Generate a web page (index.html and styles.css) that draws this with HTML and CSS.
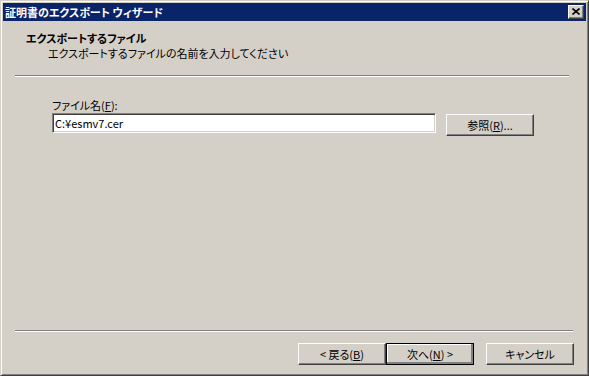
FILE: index.html
```html
<!DOCTYPE html>
<html lang="ja">
<head>
    <meta charset="UTF-8">
    <title>証明書のエクスポート ウィザード</title>
    <link rel="stylesheet" href="styles.css">
</head>
<body>
    <div class="window">
        <div class="titlebar">
            <span class="title">証明書のエクスポート ウィザード</span>
            <span class="close-btn">
                <svg width="8" height="7" viewBox="0 0 8 7">
                    <path d="M0.5 0.5 L7.5 6.5 M7.5 0.5 L0.5 6.5" stroke="#000" stroke-width="1.6" fill="none"/>
                </svg>
            </span>
        </div>
        <!-- Cabeçalho -->
        <div class="header">
            <div class="header-title">エクスポートするファイル</div>
            <div class="header-sub">エクスポートするファイルの名前を入力してください</div>
        </div>
        <div class="sep sep-top"></div>
        <div class="content">
            <label class="label" for="file">ファイル名(<u>F</u>):</label>
            <div class="row">
                <input type="text" id="file" class="field" value="C:¥esmv7.cer">
                <button class="btn browse">参照(<u>R</u>)...</button>
            </div>
        </div>
        <div class="sep sep-bottom"></div>
        <!-- Botões -->
        <div class="footer">
            <button class="btn">&lt; 戻る(<u>B</u>)</button>
            <button class="btn default">次へ(<u>N</u>) &gt;</button>
            <button class="btn cancel">キャンセル</button>
        </div>
    </div>
</body>
</html>
```

FILE: styles.css
```css
* {
    margin: 0;
    padding: 0;
    box-sizing: border-box;
    font-family: "Noto Sans CJK JP", "Liberation Sans", sans-serif;
    font-feature-settings: "palt";
}
body {
    background-color: #d4d0c8;
    color: #000;
    font-size: 11px;
}
.window {
    width: 589px;
    height: 376px;
    background-color: #d4d0c8;
    border: 1px solid;
    border-color: #d4d0c8 #404040 #404040 #d4d0c8;
    box-shadow: inset 1px 1px #fff, inset -1px -1px #808080;
    padding: 2px;
    display: flex;
    flex-direction: column;
}
.titlebar {
    height: 18px;
    background-color: #0a246a;
    color: #fff;
    display: flex;
    align-items: center;
    padding-left: 2px;
}
.title {
    font-weight: bold;
    font-size: 11px;
    line-height: 14px;
}
.close-btn {
    margin-left: auto;
    margin-right: 2px;
    width: 16px;
    height: 14px;
    background-color: #d4d0c8;
    border: 1px solid;
    border-color: #fff #404040 #404040 #fff;
    box-shadow: inset -1px -1px #808080;
    display: flex;
    align-items: center;
    justify-content: center;
    padding-bottom: 1px;
}
.header {
    height: 54px;
    padding: 10px 0 0 23px;
    line-height: 14px;
}
.header-title {
    font-weight: bold;
}
.header-sub {
    margin-left: 22px;
    margin-top: 1px;
}
.sep {
    height: 2px;
    border-top: 1px solid #808080;
    border-bottom: 1px solid #fff;
}
.sep-top {
    margin: 0 17px 0 12px;
}
.sep-bottom {
    margin: 0 13px 0 12px;
}
.content {
    flex: 1;
    padding: 21px 0 0 49px;
}
.label {
    display: block;
    line-height: 14px;
    margin-bottom: 1px;
}
.row {
    display: flex;
    align-items: flex-start;
}
.field {
    width: 384px;
    height: 20px;
    font-size: 11px;
    padding: 0 2px;
    background-color: #fff;
    border: 1px solid;
    border-color: #808080 #fff #fff #808080;
    box-shadow: inset 1px 1px #404040, inset -1px -1px #d4d0c8;
    outline: none;
}
.btn {
    width: 88px;
    height: 22px;
    font-size: 11px;
    background-color: #d4d0c8;
    color: #000;
    border: 1px solid;
    border-color: #fff #404040 #404040 #fff;
    box-shadow: inset -1px -1px #808080;
    line-height: 18px;
}
.browse {
    margin-left: 10px;
    margin-top: 1px;
}
.footer {
    height: 41px;
    padding: 11px 12px 0 0;
    display: flex;
    justify-content: flex-end;
    align-items: flex-start;
}
.default {
    outline: 1px solid #000;
    outline-offset: -1px;
    box-shadow: inset -2px -2px #808080, inset 1px 1px #fff;
}
.cancel {
    margin-left: 12px;
}
```
